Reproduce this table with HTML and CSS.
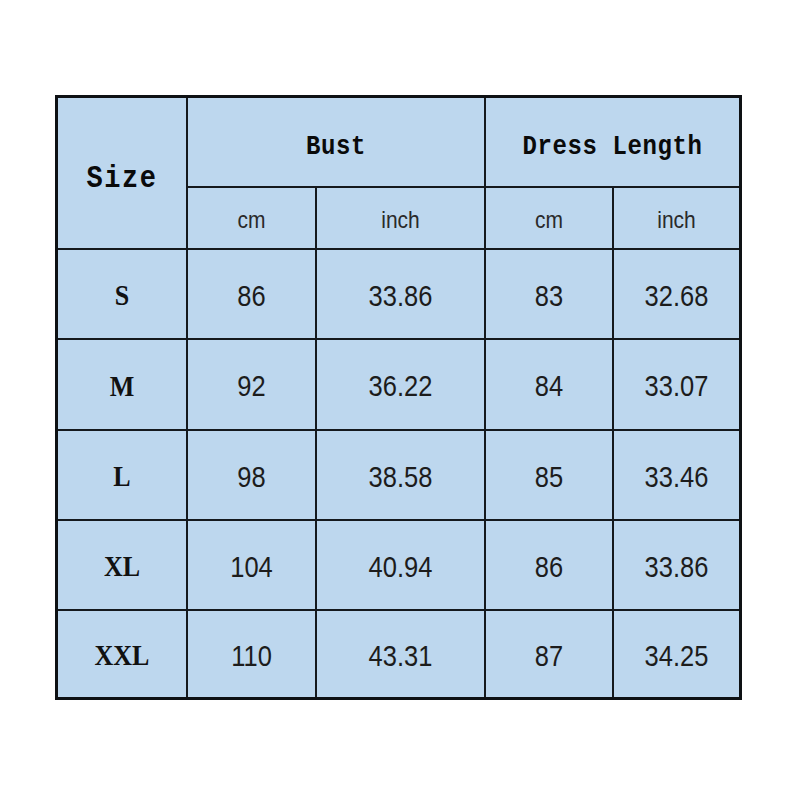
FILE: index.html
```html
<!DOCTYPE html>
<html>
<head>
<meta charset="utf-8">
<link rel="stylesheet" href="styles.css">
</head>
<body>
<div class="chart">
  <div class="cell size-head"><span class="mono size-label">Size</span></div>
  <div class="cell group bust"><span class="mono">Bust</span></div>
  <div class="cell group dress"><span class="mono">Dress Length</span></div>
  <div class="cell unit"><span>cm</span></div>
  <div class="cell unit"><span>inch</span></div>
  <div class="cell unit"><span>cm</span></div>
  <div class="cell unit"><span>inch</span></div>

  <div class="cell sz"><span>S</span></div>
  <div class="cell num"><span>86</span></div>
  <div class="cell num"><span>33.86</span></div>
  <div class="cell num"><span>83</span></div>
  <div class="cell num"><span>32.68</span></div>

  <div class="cell sz"><span>M</span></div>
  <div class="cell num"><span>92</span></div>
  <div class="cell num"><span>36.22</span></div>
  <div class="cell num"><span>84</span></div>
  <div class="cell num"><span>33.07</span></div>

  <div class="cell sz"><span>L</span></div>
  <div class="cell num"><span>98</span></div>
  <div class="cell num"><span>38.58</span></div>
  <div class="cell num"><span>85</span></div>
  <div class="cell num"><span>33.46</span></div>

  <div class="cell sz"><span>XL</span></div>
  <div class="cell num"><span>104</span></div>
  <div class="cell num"><span>40.94</span></div>
  <div class="cell num"><span>86</span></div>
  <div class="cell num"><span>33.86</span></div>

  <div class="cell sz"><span>XXL</span></div>
  <div class="cell num"><span>110</span></div>
  <div class="cell num"><span>43.31</span></div>
  <div class="cell num"><span>87</span></div>
  <div class="cell num"><span>34.25</span></div>
</div>
</body>
</html>
```

FILE: styles.css
```css
html, body {
  margin: 0;
  padding: 0;
  background: #ffffff;
}
body {
  padding: 95px 0 0 55px;
}
.chart {
  display: grid;
  width: 681px;
  grid-template-columns: 128px 127px 167px 126px 125px;
  grid-template-rows: 88px 60px 88px 89px 88px 88px 86px;
  gap: 2px;
  background: #15191d;
  border: 3px solid #0e1114;
}
.cell {
  background: #bdd7ee;
  display: flex;
  align-items: center;
  justify-content: center;
}
.cell span {
  display: inline-block;
  transform: scaleY(1.15);
}
.size-head {
  grid-row: 1 / span 2;
  padding-top: 12px;
}
.bust {
  grid-column: 2 / span 2;
  padding-top: 8px;
}
.dress {
  grid-column: 4 / span 2;
  padding-top: 8px;
}
.mono {
  font-family: "Liberation Mono", "DejaVu Sans Mono", monospace;
  font-weight: bold;
  font-size: 24px;
  color: #0a0a0a;
  letter-spacing: 0.6px;
}
.size-label {
  font-size: 27px;
  letter-spacing: 1.5px;
}
.unit {
  font-family: "Liberation Sans", Arial, sans-serif;
  font-size: 21px;
  color: #2a2a2a;
  padding-top: 4px;
}
.sz {
  font-family: "Liberation Serif", "Times New Roman", serif;
  font-weight: bold;
  font-size: 26px;
  color: #111111;
  padding-top: 4px;
}
.num {
  font-family: "Liberation Sans", Arial, sans-serif;
  font-size: 25.5px;
  color: #1c1c1c;
  padding-top: 4px;
}
```
